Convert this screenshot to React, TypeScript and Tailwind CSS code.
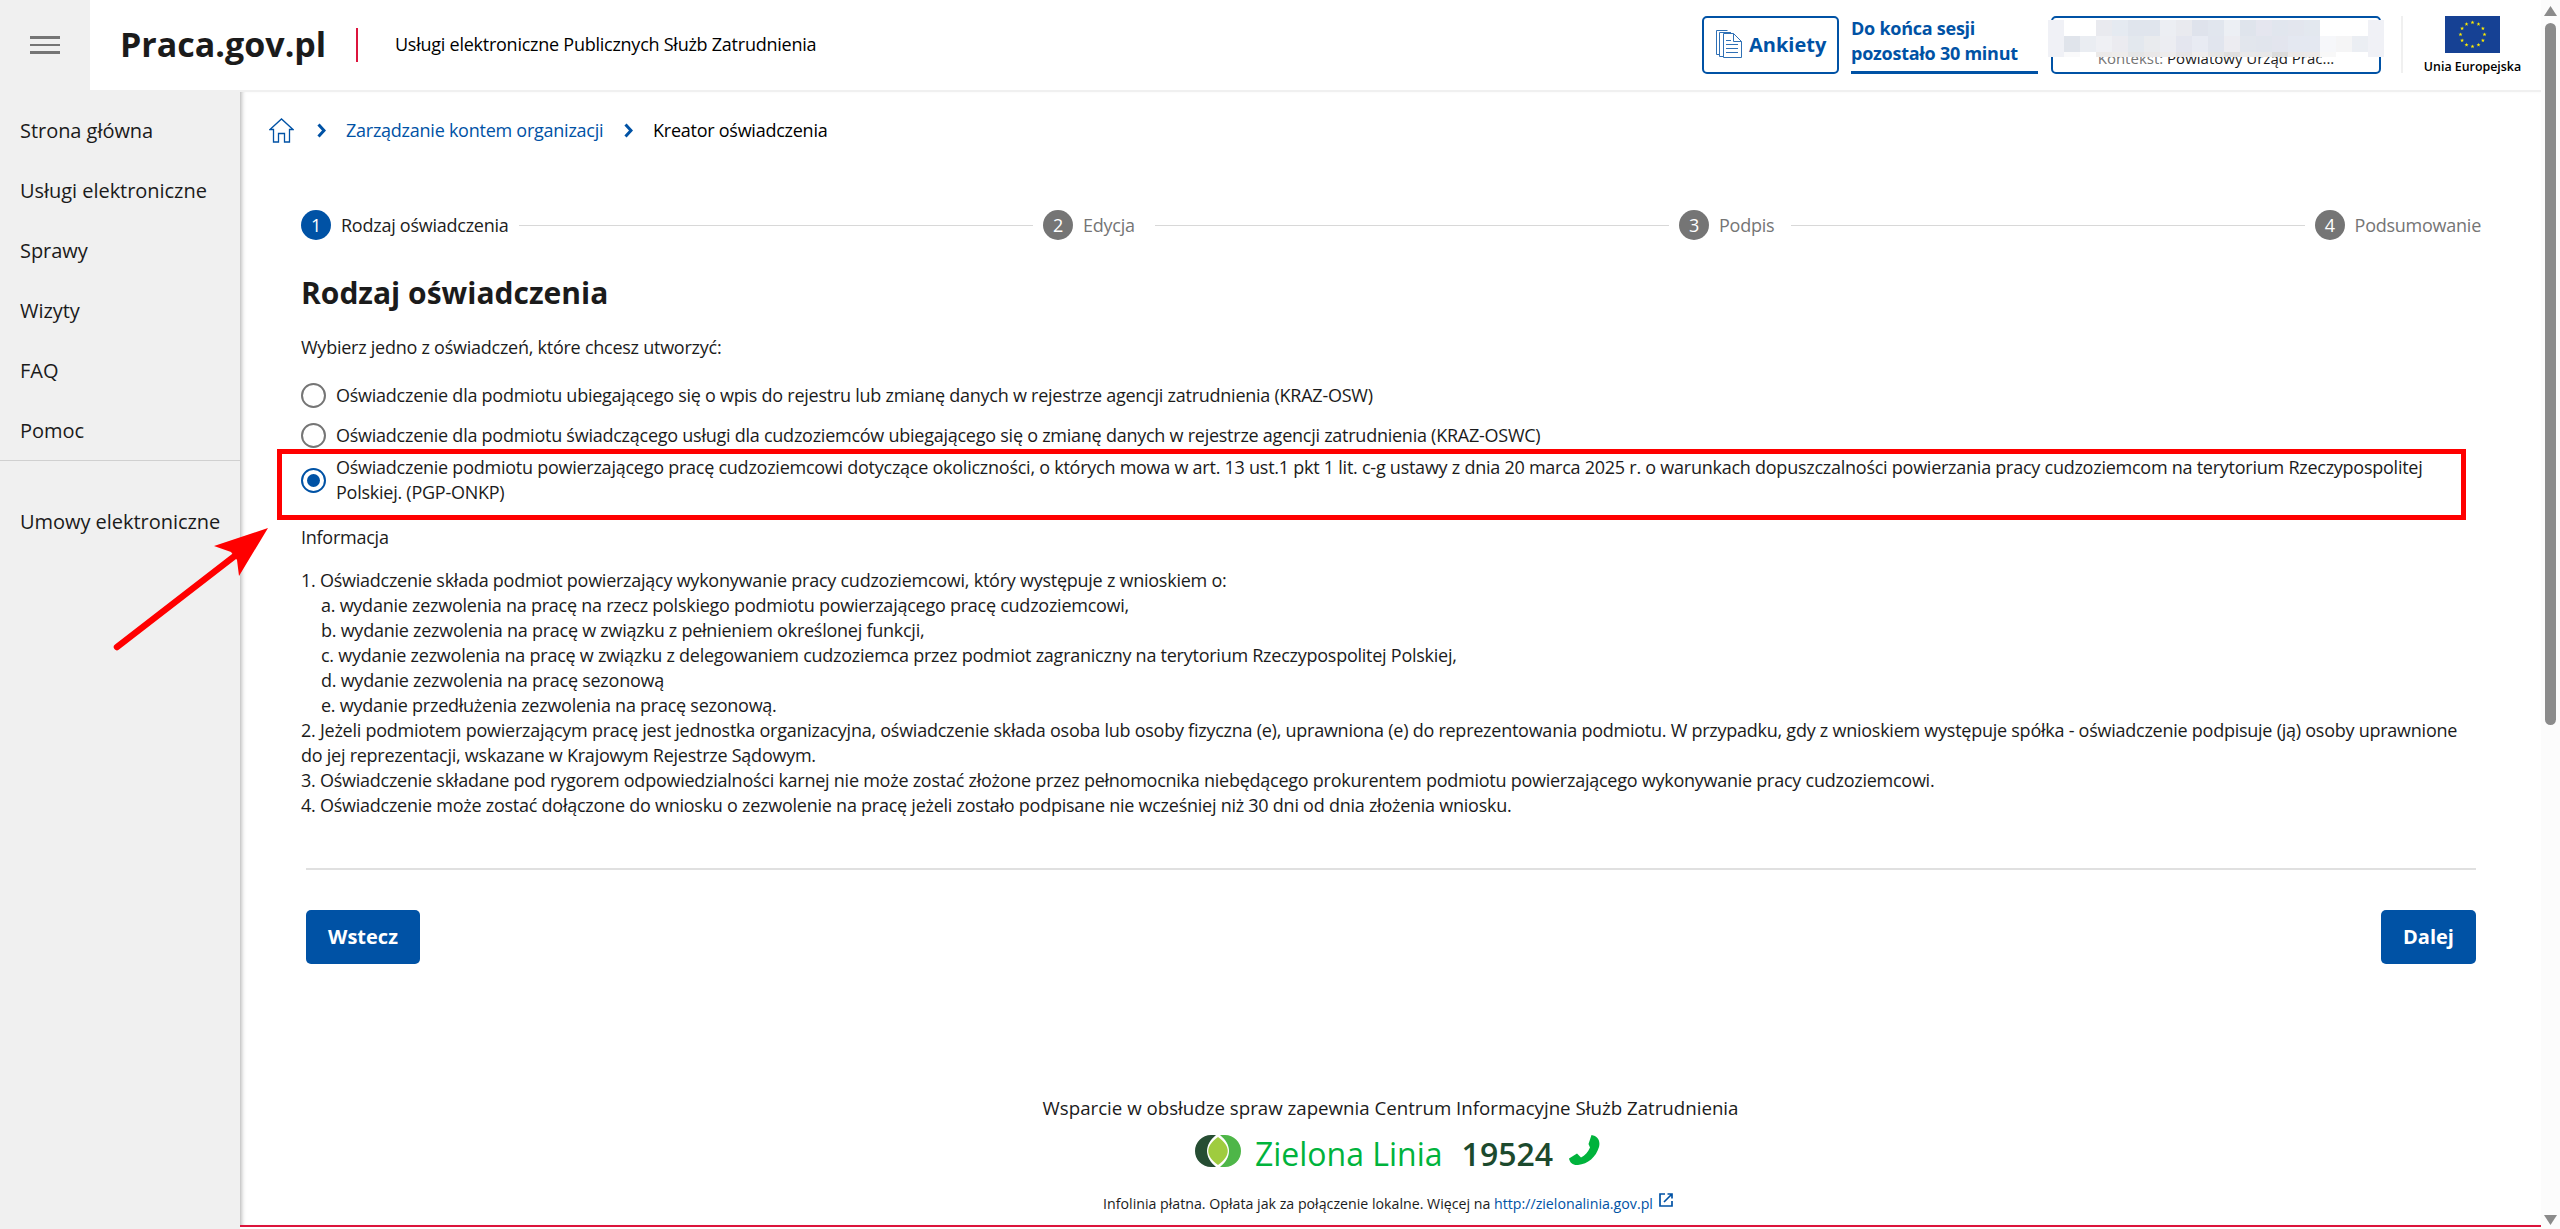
import type { ReactNode } from 'react'

const menu = ['Strona główna', 'Usługi elektroniczne', 'Sprawy', 'Wizyty', 'FAQ', 'Pomoc']

const subpoints = [
  'a. wydanie zezwolenia na pracę na rzecz polskiego podmiotu powierzającego pracę cudzoziemcowi,',
  'b. wydanie zezwolenia na pracę w związku z pełnieniem określonej funkcji,',
  'c. wydanie zezwolenia na pracę w związku z delegowaniem cudzoziemca przez podmiot zagraniczny na terytorium Rzeczypospolitej Polskiej,',
  'd. wydanie zezwolenia na pracę sezonową',
  'e. wydanie przedłużenia zezwolenia na pracę sezonową.',
]

// colours of the blurred user name, 16px cells
const maskRows = [
  ['#f0f1f6', '#ffffff', '#ffffff', '#e9eaef', '#e5eaf1', '#e0e5ed', '#e0e5ed', '#eceef3', '#e9eaef', '#dfe3ec', '#e1e6ee', '#eceff4', '#dfe4ec', '#e5e6ef', '#e1e6ee', '#e3e6ee', '#e3e8ef', '#ffffff', '#ffffff', '#ffffff', '#f0f1f6'],
  ['#f0f1f6', '#e0e4eb', '#eaedf2', '#eff0f4', '#ebebf0', '#e3e8ee', '#e9ebee', '#ecedf2', '#e4e6ef', '#e8ebf3', '#e1e5ee', '#ececf1', '#e2e6ed', '#e1e5ed', '#e3e5ee', '#e4e8f1', '#e4e8f1', '#f6f7fa', '#f5f5f6', '#ebeef3', '#f0f1f6'],
]

const maskEdge = ['#f0f1f6', '#fafafb', '#ffffff', '#eceae9', '#eeeceb', '#e4e5e6', '#eae8e8', '#edecec', '#e6e5e6', '#efeded', '#e5e5e5', '#e0dfdf', '#e9e9ea', '#e8e8e9', '#dcdcdc', '#ebe8e7', '#ece9e9', '#f8f8f8', '#ffffff', '#ffffff', '#f0f1f6']

function Step({ n, active, className, children }: { n: number; active?: boolean; className: string; children: ReactNode }) {
  return (
    <div className={`flex shrink-0 items-center gap-[10px] ${className}`}>
      <span className={`flex h-[30px] w-[30px] items-center justify-center rounded-full text-white ${active ? 'bg-[#0052a5]' : 'bg-[#757575]'}`}>
        {n}
      </span>
      <span className={active ? 'text-[#212121]' : 'text-[#757575]'}>{children}</span>
    </div>
  )
}

function Radio({ checked }: { checked?: boolean }) {
  return (
    <span className={`flex h-[25px] w-[25px] shrink-0 items-center justify-center rounded-full border-2 bg-white ${checked ? 'border-[#0052a5]' : 'border-[#757575]'}`}>
      {checked && <span className="h-[13px] w-[13px] rounded-full bg-[#0052a5]" />}
    </span>
  )
}

function Chevron() {
  return (
    <svg width="9" height="15" viewBox="0 0 9 15" fill="none" stroke="#0052a5" strokeWidth="3">
      <path d="M1.500 1.500 L7 7.500 L1.500 13.500" />
    </svg>
  )
}

function EuFlag() {
  return (
    <svg width="55" height="37" viewBox="0 0 55 37">
      <rect width="55" height="37" fill="#164194" />
      {Array.from({ length: 12 }, (_, i) => {
        const a = (i * Math.PI) / 6
        return (
          <path
            key={i}
            fill="#ffed00"
            transform={`translate(${27.5 + 12 * Math.sin(a)} ${18.5 - 12 * Math.cos(a)})`}
            d="M0 -2.1 L0.5 -0.65 L2 -0.65 L0.8 0.25 L1.25 1.7 L0 0.8 L-1.25 1.7 L-0.8 0.25 L-2 -0.65 L-0.5 -0.65 Z"
          />
        )
      })}
    </svg>
  )
}

function Header() {
  return (
    <header className="flex h-[92px] border-b-2 border-[#f0f0f0]">
      <div className="flex h-[92px] w-[90px] shrink-0 items-center justify-center bg-[#f0f0f0] pb-[2px]">
        <svg width="30" height="18" viewBox="0 0 30 18" fill="#757575">
          <rect width="30" height="3" />
          <rect y="8" width="30" height="2" />
          <rect y="15" width="30" height="3" />
        </svg>
      </div>
      <div className="flex flex-1 items-center pl-[30px]">
        <span className="w-[236px] pb-[2px] text-[34px] font-bold text-[#1b1b1b]">Praca.gov.pl</span>
        <span className="h-[34px] w-[2px] bg-[#dc143c]" />
        <span className="ml-[37px] pb-[2px] text-[18px] tracking-[-0.25px] text-black">Usługi elektroniczne Publicznych Służb Zatrudnienia</span>
      </div>
      <div className="flex pt-4">
        <div className="flex h-[58px] w-[137px] items-center rounded-[5px] border-2 border-[#0052a5] pl-[12px] text-[20px] font-bold text-[#0052a5]">
          <svg className="mb-[2px]" width="26" height="28" viewBox="0 0 26 28" fill="none" stroke="#2f70b5" strokeWidth="1">
            <path d="M4 24.500H.5V.5H11.500" />
            <path d="M7 26.500H3.500V2.500H15" />
            <path d="M7.500 3.500H17.500L25.500 11.500V27.500H7.500Z" fill="#fff" />
            <path d="M17.500 3.500V11.500H25.500M10 10.500H15M10 14.500H22M10 18.500H22M10 22.500H22" />
          </svg>
          <span className="ml-[7px]">Ankiety</span>
        </div>
        <div className="ml-[12px] h-[58px] w-[187px] border-b-[3px] border-[#0052a5] text-[18px] leading-[25px] font-bold tracking-[-0.25px] text-[#0052a5]">
          Do końca sesji
          <br />
          pozostało 30 minut
        </div>
        <div className="relative ml-[13px] h-[58px] w-[330px] rounded-[5px] border-2 border-[#0052a5]">
          <div className="pt-[24px] text-center text-[15px] leading-[32px] text-[#1b1b1b]">
            <span className="text-[#757575]">Kontekst:</span> Powiatowy Urząd Prac...
          </div>
          <div className="absolute -left-[5px] top-[2px] bg-white">
            {maskRows.map((row, i) => (
              <div key={i} className="flex">
                {row.map((c, j) => (
                  <span key={j} className="h-4 w-4" style={{ backgroundColor: c }} />
                ))}
              </div>
            ))}
            <div className="flex">
              {maskEdge.map((c, j) => (
                <span key={j} className="h-[5px] w-4" style={{ backgroundColor: c }} />
              ))}
            </div>
          </div>
        </div>
        <div className="ml-[20px] h-[57px] w-[2px] bg-[#f0f0f0]" />
        <div className="ml-[20px] flex w-[99px] flex-col items-center text-[12.4px] leading-[18px] font-semibold text-black">
          <EuFlag />
          <span className="mt-[5px]">Unia Europejska</span>
        </div>
        <div className="w-[19px]" />
      </div>
    </header>
  )
}

function Sidebar() {
  return (
    <nav className="w-[240px] shrink-0 bg-[#f0f0f0] pt-[8px] text-[20px] tracking-[-0.04px] text-[#1b1b1b]">
      {menu.map((m) => (
        <div key={m} className="flex h-[60px] items-center pt-[2px] pl-5">{m}</div>
      ))}
      <div className="border-t border-[#d0d0d0] pt-[31px]">
        <div className="flex h-[60px] items-center pl-5">Umowy elektroniczne</div>
      </div>
    </nav>
  )
}

function Stepper() {
  return (
    <div className="flex h-[30px] items-center text-[18px] tracking-[-0.25px]">
      <Step n={1} active className="w-[218px]">Rodzaj oświadczenia</Step>
      <span className="mr-[10px] h-px flex-1 bg-[#d8d8d8]" />
      <Step n={2} className="w-[112px]">Edycja</Step>
      <span className="mr-[10px] h-px w-[514px] bg-[#d8d8d8]" />
      <Step n={3} className="w-[112px]">Podpis</Step>
      <span className="mr-[10px] h-px w-[514px] bg-[#d8d8d8]" />
      <Step n={4} className="w-[166px]">Podsumowanie</Step>
    </div>
  )
}

function Support() {
  return (
    <div className="flex flex-col items-center">
      <div className="text-[18.7px] leading-[26px]">Wsparcie w obsłudze spraw zapewnia Centrum Informacyjne Służb Zatrudnienia</div>
      <div className="mt-[6px] flex h-[48px] items-center pl-[14px]">
        <svg width="46" height="32" viewBox="0 0 46 32">
          <path d="M21 0H16A16 16 0 0 0 16 32H21C9 22 9 10 21 0Z" fill="#264d33" />
          <path d="M25 0H30A16 16 0 0 1 30 32H25C37 22 37 10 25 0Z" fill="#4eb648" />
          <path d="M23 2C36 11 36 21 23 30C10 21 10 11 23 2Z" fill="#9fcc3f" />
        </svg>
        <span className="ml-[14px] pt-[5px] text-[32px] text-[#00b33c]">Zielona Linia</span>
        <span className="ml-[19px] pt-[5px] text-[32px] font-semibold text-[#1c4a2e]">19524</span>
        <svg className="mb-[2px] ml-[16px]" width="31" height="31" viewBox="0 0 31 31" fill="#00b33c">
          <path d="M22.500 0C29 1 31.500 6 30 12C27 22 19 29 9 30C4 30.500 1 28 0 23.500L8 18.500L12 22.500C16 20.500 19 17 21 12.500L19.500 9Z" />
        </svg>
      </div>
      <div className="mt-[18px] flex items-center pr-[5px] text-[14.2px] leading-[20px]">
        <span>
          Infolinia płatna. Opłata jak za połączenie lokalne. Więcej na <span className="text-[#0052a5]">http://zielonalinia.gov.pl</span>
        </span>
        <svg className="mb-[8px] ml-[6px]" width="14" height="14" viewBox="0 0 14 14" fill="none" stroke="#0052a5" strokeWidth="1.7">
          <path d="M6 1H1V13H13V8M8.500 1H13V5.500M13 1L5 9" />
        </svg>
      </div>
    </div>
  )
}

function Main() {
  return (
    <main className="relative mb-[2px] flex flex-1 flex-col border-b-2 border-[#dc143c] shadow-[inset_5px_0_5px_-4px_rgba(0,0,0,0.35)]">
      <div className="flex h-[76px] items-center pl-[29px] text-[18px] tracking-[-0.25px] whitespace-nowrap">
        <svg width="25" height="25" viewBox="0 0 25 25" fill="none" stroke="#0052a5" strokeWidth="1.3">
          <path d="M4.500 11.500H1L12.500 1L24 11.500H20.500V24H15.500V15.500H9.500V24H4.500Z" />
        </svg>
        <span className="ml-[23px]"><Chevron /></span>
        <span className="ml-[20px] w-[257px] text-[#0052a5]">Zarządzanie kontem organizacji</span>
        <span className="ml-[21px]"><Chevron /></span>
        <span className="ml-[20px] text-black">Kreator oświadczenia</span>
      </div>
      <div className="pl-[61px] pr-[60px] pt-[42px]">
        <Stepper />
        <h1 className="mt-[33px] text-[30px] leading-[40px] font-bold text-[#1b1b1b]">Rodzaj oświadczenia</h1>
        <div className="mt-[22px] text-[18px] leading-[25px] tracking-[-0.25px]">
          <p>Wybierz jedno z oświadczeń, które chcesz utworzyć:</p>
          <div className="mt-[15px] flex h-[40px] items-center gap-[10px]">
            <Radio />
            Oświadczenie dla podmiotu ubiegającego się o wpis do rejestru lub zmianę danych w rejestrze agencji zatrudnienia (KRAZ-OSW)
          </div>
          <div className="flex h-[40px] items-center gap-[10px]">
            <Radio />
            Oświadczenie dla podmiotu świadczącego usługi dla cudzoziemców ubiegającego się o zmianę danych w rejestrze agencji zatrudnienia (KRAZ-OSWC)
          </div>
          <div className="flex h-[50px] items-center gap-[10px]">
            <Radio checked />
            <span>
              Oświadczenie podmiotu powierzającego pracę cudzoziemcowi dotyczące okoliczności, o których mowa w art. 13 ust.1 pkt 1 lit. c-g ustawy z dnia 20 marca 2025 r. o warunkach dopuszczalności powierzania pracy cudzoziemcom na terytorium Rzeczypospolitej
              <br />
              Polskiej. (PGP-ONKP)
            </span>
          </div>
          <p className="mt-[20px]">Informacja</p>
          <div className="mt-[18px] whitespace-nowrap">
            <p>1. Oświadczenie składa podmiot powierzający wykonywanie pracy cudzoziemcowi, który występuje z wnioskiem o:</p>
            {subpoints.map((s) => (
              <p key={s} className="pl-[20px]">{s}</p>
            ))}
            <p>
              2. Jeżeli podmiotem powierzającym pracę jest jednostka organizacyjna, oświadczenie składa osoba lub osoby fizyczna (e), uprawniona (e) do reprezentowania podmiotu. W przypadku, gdy z wnioskiem występuje spółka - oświadczenie podpisuje (ją) osoby uprawnione
              <br />
              do jej reprezentacji, wskazane w Krajowym Rejestrze Sądowym.
            </p>
            <p>3. Oświadczenie składane pod rygorem odpowiedzialności karnej nie może zostać złożone przez pełnomocnika niebędącego prokurentem podmiotu powierzającego wykonywanie pracy cudzoziemcowi.</p>
            <p>4. Oświadczenie może zostać dołączone do wniosku o zezwolenie na pracę jeżeli zostało podpisane nie wcześniej niż 30 dni od dnia złożenia wniosku.</p>
          </div>
        </div>
      </div>
      <div className="mr-[65px] ml-[66px] mt-[50px] flex justify-between border-t-2 border-[#e0e0e0] pt-[40px] text-[20px] font-bold text-white">
        <button className="h-[54px] w-[114px] rounded-[5px] bg-[#0052a5]">Wstecz</button>
        <button className="h-[54px] w-[95px] rounded-[5px] bg-[#0052a5]">Dalej</button>
      </div>
      <div className="mt-[131px]">
        <Support />
      </div>
      {/* annotation frame and arrow */}
      <div className="absolute left-[37px] top-[357px] h-[71px] w-[2189px] border-[5px] border-[#ff0000]" />
      <svg className="absolute -left-[130px] top-[430px]" width="165" height="130" viewBox="0 0 165 130">
        <path d="M7 125L126 33" stroke="#ff0000" strokeWidth="6.500" strokeLinecap="round" />
        <path d="M158 6L129 54L127 38L121 30L104 24Z" fill="#ff0000" />
      </svg>
    </main>
  )
}

export default function App() {
  return (
    <div className="flex h-[1229px] w-[2560px] overflow-hidden bg-white font-['Open_Sans',sans-serif] text-[#1b1b1b]">
      <div className="flex w-[2541px] flex-col">
        <Header />
        <div className="flex flex-1">
          <Sidebar />
          <Main />
        </div>
      </div>
      <div className="flex flex-1 flex-col items-center justify-between bg-[#fcfcfc] pt-[6px] pb-[4px]">
        <svg width="13" height="10" viewBox="0 0 13 10" fill="#8b8b8b">
          <path d="M6.500 0L13 10H0Z" />
        </svg>
        <div className="mt-[7px] h-[702px] w-[11px] rounded-full bg-[#8b8b8b]" />
        <div className="flex-1" />
        <svg width="13" height="10" viewBox="0 0 13 10" fill="#8b8b8b">
          <path d="M6.500 10L13 0H0Z" />
        </svg>
      </div>
    </div>
  )
}
